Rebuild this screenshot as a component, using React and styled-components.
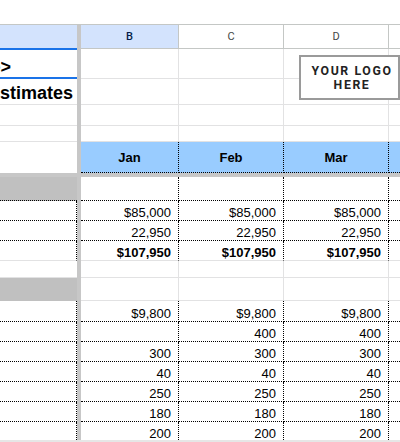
import React from "react";
import styled, { createGlobalStyle } from "styled-components";

const GRID = "#e2e2e3";
const HEAD_LINE = "#c4c7c5";
const FREEZE = "#c7c7c7";
const SILVER = "#c0c0c0";
const MONTH_BLUE = "#99ccff";
const SEL_BG = "#d3e3fd";
const COLS = "77px 4px 98px 105px 105px 105px";

const line = (k) =>
  k === "dot"
    ? "1px dotted #000"
    : k === "grid"
    ? `1px solid ${GRID}`
    : k === "head"
    ? `1px solid ${HEAD_LINE}`
    : "none";

const Global = createGlobalStyle`
  html, body { margin: 0; padding: 0; background: #fff; overflow: hidden; }
  body { width: 400px; height: 442px; font-family: "Liberation Sans", Arial, sans-serif; }
`;

const Sheet = styled.div`
  position: relative;
  width: 400px;
  height: 442px;
  overflow: hidden;
  background: #fff;
`;

const TopBar = styled.div`
  height: 24px;
  background: #fff;
`;

const HeadRow = styled.div`
  display: grid;
  grid-template-columns: ${COLS};
  height: 25px;
  box-sizing: border-box;
  border-top: 1px solid ${HEAD_LINE};
`;

const HeadCell = styled.div`
  box-sizing: border-box;
  display: flex;
  align-items: center;
  justify-content: center;
  background: ${(p) => (p.$sel ? SEL_BG : "#fff")};
  color: ${(p) => (p.$sel ? "#041e49" : "#444746")};
  border-right: ${(p) => (p.$last ? "none" : `1px solid ${HEAD_LINE}`)};
  border-bottom: 1px solid ${HEAD_LINE};
  font-family: Roboto, "Liberation Sans", Arial, sans-serif;
  font-size: 11px;
  font-weight: ${(p) => (p.$sel ? 500 : 400)};
`;

const Row = styled.div`
  display: grid;
  grid-template-columns: ${COLS};
  height: ${(p) => p.$h}px;
`;

const Freeze = styled.div`
  background: ${FREEZE};
`;

const FreezeRow = styled.div`
  height: 4px;
  background: ${FREEZE};
`;

const Cell = styled.div`
  box-sizing: border-box;
  min-width: 0;
  overflow: hidden;
  display: flex;
  align-items: ${(p) => (p.$mid ? "center" : "flex-end")};
  justify-content: ${(p) => (p.$center ? "center" : "flex-end")};
  background: ${(p) => p.$bg || "#fff"};
  border-right: ${(p) => line(p.$r)};
  border-bottom: ${(p) => line(p.$b)};
  padding: ${(p) => (p.$center ? "0" : "0 7px 0 3px")};
  font-size: 13px;
  line-height: 15px;
  font-weight: ${(p) => (p.$bold ? 700 : 400)};
  color: #000;
  white-space: nowrap;
`;

const TitleCell = styled.div`
  box-sizing: border-box;
  min-width: 0;
  overflow: hidden;
  display: flex;
  align-items: flex-end;
  justify-content: flex-end;
  border-bottom: 1px solid ${GRID};
  padding-right: ${(p) => p.$pr}px;
  font-size: 18px;
  font-weight: 700;
  color: #000;
  white-space: nowrap;
`;

const Selection = styled.div`
  position: absolute;
  left: 0;
  top: 48px;
  width: 77px;
  height: 31px;
  box-sizing: border-box;
  border-top: 2px solid #1a73e8;
  border-bottom: 2px solid #1a73e8;
  pointer-events: none;
`;

const Logo = styled.div`
  position: absolute;
  left: 299px;
  top: 55px;
  width: 101px;
  height: 45px;
  box-sizing: border-box;
  border: 2px solid #9a9a9a;
  background: #fff;
  display: flex;
  flex-direction: column;
  align-items: center;
  justify-content: center;
  padding-left: 5px;
  font-family: Roboto, "Liberation Sans", Arial, sans-serif;
  font-weight: 700;
  font-size: 12.3px;
  line-height: 14px;
  letter-spacing: 1.6px;
  color: #222;
  text-align: center;
`;

const ScrollEdge = styled.div`
  position: absolute;
  left: 0;
  right: 0;
  bottom: 0;
  height: 2px;
  background: #e6e6e6;
`;

const MONTHS = ["Jan", "Feb", "Mar", ""];
const rep = (v) => [v, v, v, ""];

const body = [
  { h: 24, aBg: SILVER, aB: "dot", aR: "none", r: "dot", b: "dot", vals: rep("") },
  { h: 20, aB: "dot", aR: "dot", r: "dot", b: "dot", vals: rep("$85,000") },
  { h: 20, aB: "dot", aR: "dot", r: "dot", b: "dot", vals: rep("22,950") },
  { h: 20, aB: "grid", aR: "dot", r: "dot", b: "grid", bold: true, vals: rep("$107,950") },
  { h: 17, aB: "grid", aR: "none", r: "grid", b: "grid", vals: rep("") },
  { h: 23, aBg: SILVER, aB: "none", aR: "none", r: "grid", b: "grid", vals: rep("") },
  { h: 21, aB: "dot", aR: "dot", r: "dot", b: "dot", vals: rep("$9,800") },
  { h: 20, aB: "dot", aR: "dot", r: "dot", b: "dot", vals: ["", "400", "400", ""] },
  { h: 20, aB: "dot", aR: "dot", r: "dot", b: "dot", vals: rep("300") },
  { h: 20, aB: "dot", aR: "dot", r: "dot", b: "dot", vals: rep("40") },
  { h: 20, aB: "dot", aR: "dot", r: "dot", b: "dot", vals: rep("250") },
  { h: 20, aB: "dot", aR: "dot", r: "dot", b: "dot", vals: rep("180") },
  { h: 20, aB: "dot", aR: "dot", r: "dot", b: "dot", vals: rep("200") },
];

function EmptyRow({ h, bottomA = "grid" }) {
  return (
    <Row $h={h}>
      <Cell $b={bottomA} />
      <Freeze />
      {MONTHS.map((m, i) => (
        <Cell key={i} $r="grid" $b="grid" />
      ))}
    </Row>
  );
}

export default function App() {
  return (
    <>
      <Global />
      <Sheet>
        <TopBar />
        <HeadRow>
          <HeadCell $sel $last />
          <Freeze />
          <HeadCell $sel>B</HeadCell>
          <HeadCell>C</HeadCell>
          <HeadCell>D</HeadCell>
          <HeadCell />
        </HeadRow>

        <Row $h={30}>
          <TitleCell $pr={66}>&lt;Company Name&gt;</TitleCell>
          <Freeze />
          {MONTHS.map((m, i) => (
            <Cell key={i} $r="grid" $b="grid" />
          ))}
        </Row>
        <Row $h={26}>
          <TitleCell $pr={4}>Monthly Revenue &amp; Expense Estimates</TitleCell>
          <Freeze />
          {MONTHS.map((m, i) => (
            <Cell key={i} $r="grid" $b="grid" />
          ))}
        </Row>
        <EmptyRow h={21} />
        <EmptyRow h={16} />

        <Row $h={31}>
          <Cell />
          <Freeze />
          {MONTHS.map((m, i) => (
            <Cell key={i} $bg={MONTH_BLUE} $r="dot" $b="dot" $mid $center $bold>
              {m}
            </Cell>
          ))}
        </Row>
        <FreezeRow />

        {body.map((r, i) => (
          <Row key={i} $h={r.h}>
            <Cell $bg={r.aBg} $b={r.aB} $r={r.aR} />
            <Freeze />
            {r.vals.map((v, j) => (
              <Cell key={j} $r={r.r} $b={r.b} $bold={r.bold}>
                {v}
              </Cell>
            ))}
          </Row>
        ))}

        <Selection />
        <Logo>
          <span>YOUR LOGO</span>
          <span>HERE</span>
        </Logo>
        <ScrollEdge />
      </Sheet>
    </>
  );
}
